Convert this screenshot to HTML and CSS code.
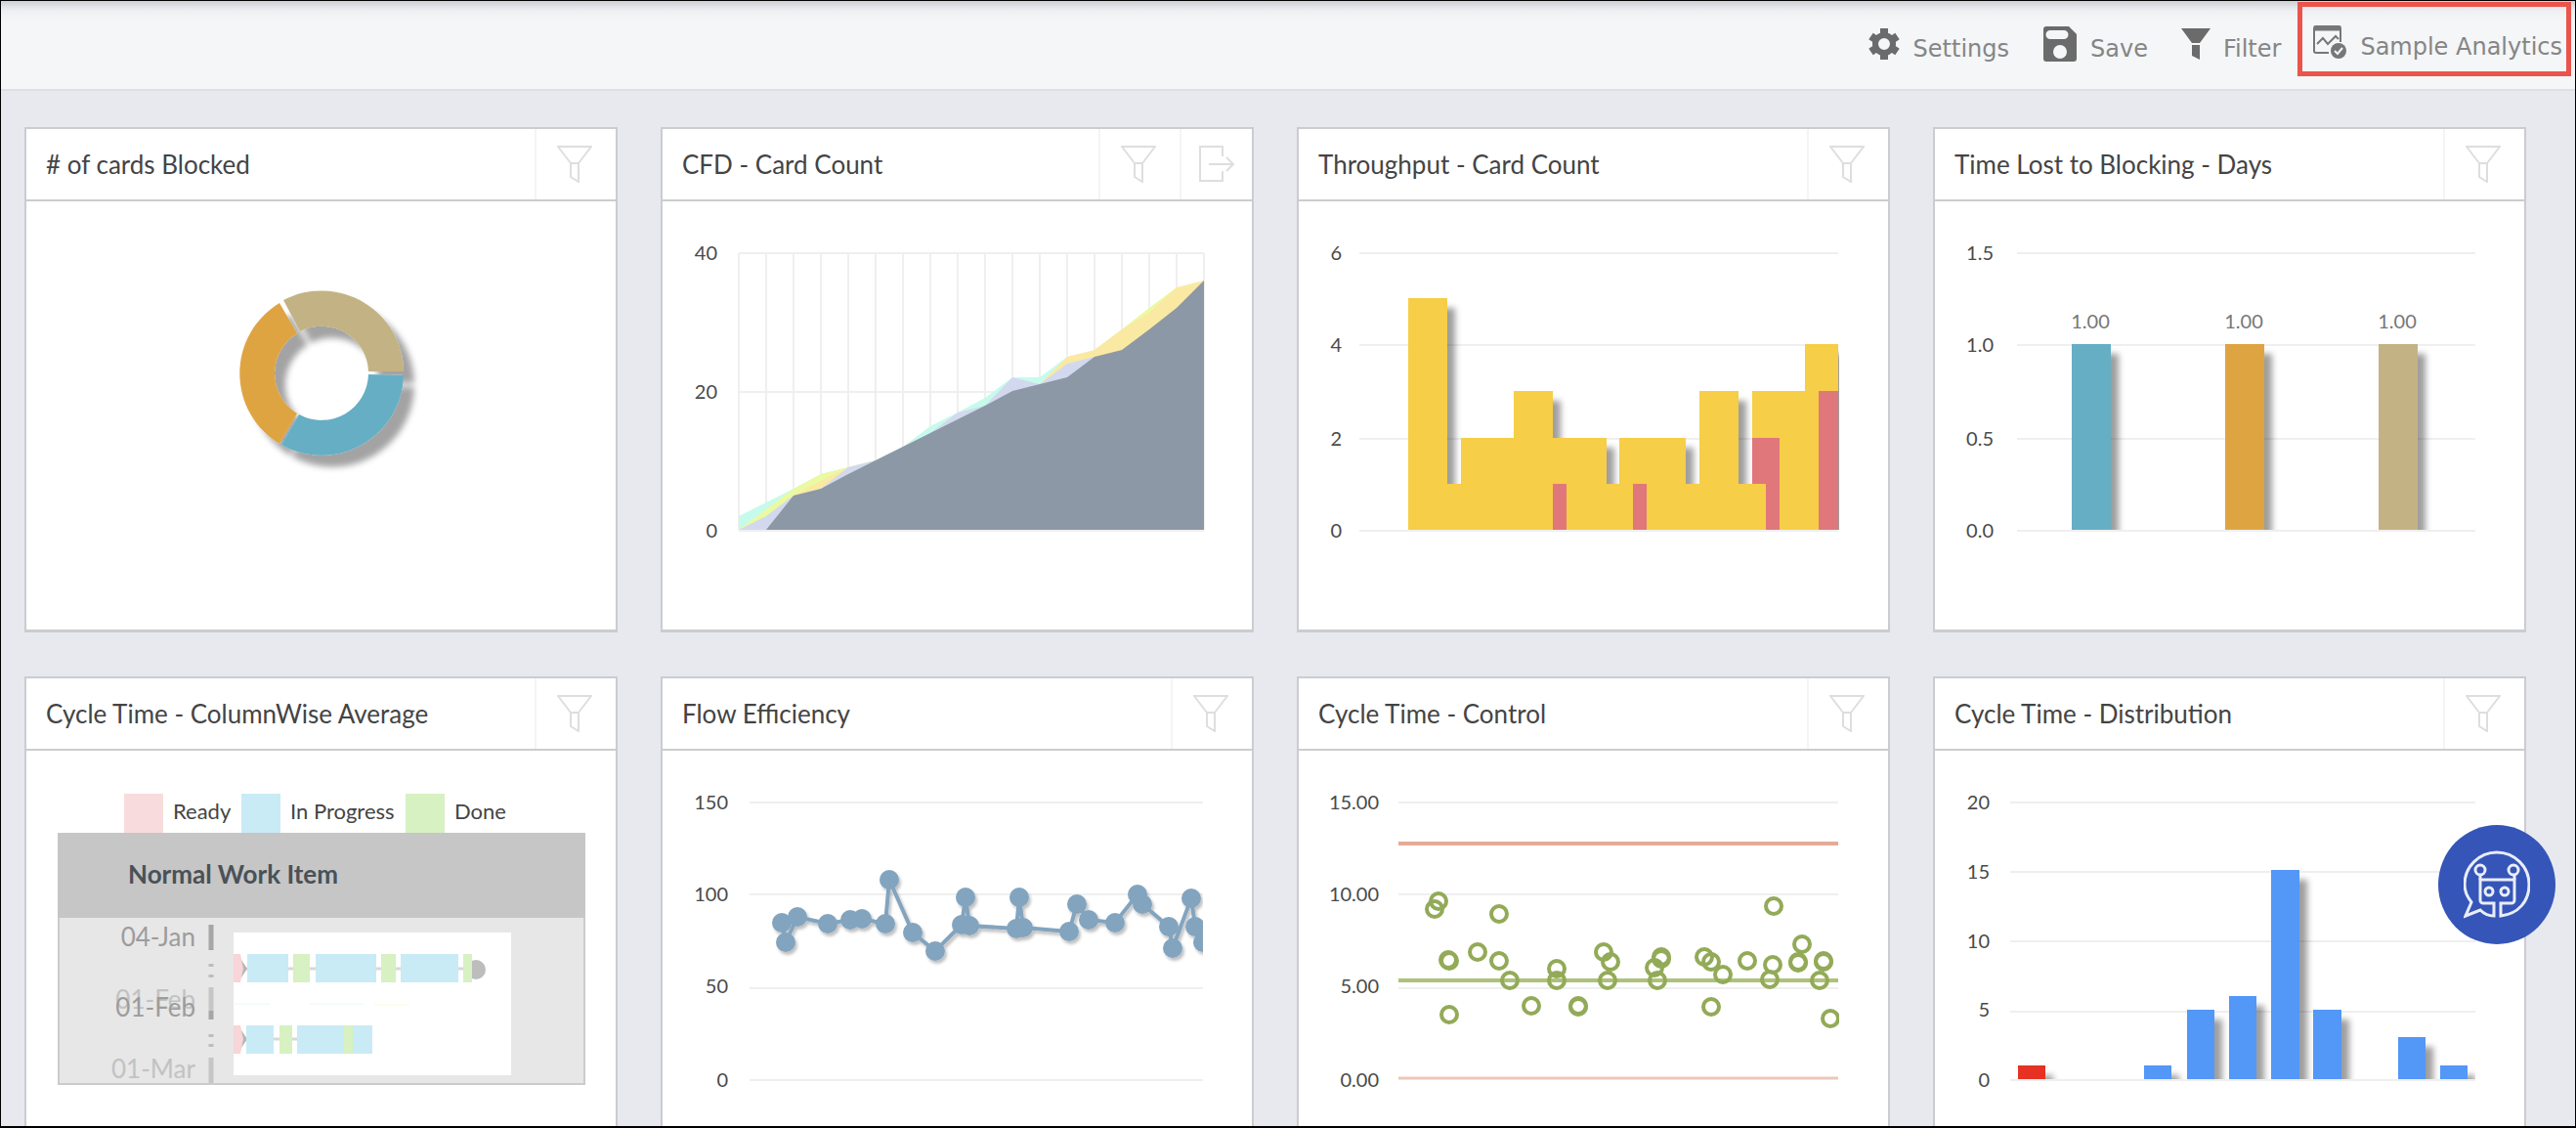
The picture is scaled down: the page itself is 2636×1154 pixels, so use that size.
FILE: index.html
```html
<!DOCTYPE html>
<html lang="en">
<head>
    <meta charset="UTF-8">
    <meta name="viewport" content="width=device-width, initial-scale=1.0">
    <title>Analytics Dashboard</title>
    <link rel="stylesheet" href="styles.css">
</head>
<body>
    <svg class="defs" aria-hidden="true">
        <defs>
            <filter id="shadow" x="-20%" y="-20%" width="150%" height="150%">
                <feDropShadow dx="8" dy="10" stdDeviation="3" flood-color="#000" flood-opacity="0.38"/>
            </filter>
            <filter id="ringShadow" x="-20%" y="-20%" width="150%" height="150%">
                <feDropShadow dx="11" dy="12" stdDeviation="3" flood-color="#000" flood-opacity="0.36"/>
            </filter>
            <filter id="dotShadow" x="-10%" y="-20%" width="120%" height="150%">
                <feDropShadow dx="2" dy="3" stdDeviation="1.5" flood-color="#000" flood-opacity="0.25"/>
            </filter>
            <clipPath id="plot"><rect x="78" y="40" width="475" height="296"/></clipPath>
            <symbol id="funnel" viewBox="0 0 36 38">
                <path d="M1 1h34L22 18v19l-8-5V18z M14 18h8" fill="none" stroke="#dedede" stroke-width="2"/>
            </symbol>
        </defs>
    </svg>
    <div class="page">
        <header class="toolbar">
            <button class="tool">
                <svg width="34" height="34" viewBox="0 0 34 34" fill="none" stroke="#6b6b6b"><circle cx="17" cy="17" r="9" stroke-width="6"/><path stroke-width="8" d="M17 1V7 M17 27V33 M3.500 9L8 12 M26 22L30.500 25 M3.500 25L8 22 M26 12L30.500 9"/></svg>
                <span>Settings</span>
            </button>
            <button class="tool">
                <svg width="36" height="38" viewBox="0 0 36 38"><path fill="#6b6b6b" fill-rule="evenodd" d="M4 1h23l8 8v25a3 3 0 0 1-3 3H4a3 3 0 0 1-3-3V4a3 3 0 0 1 3-3z M8 5a4 4 0 0 0 0 9h14a4 4 0 0 0 0-9z M18 20a7 7 0 1 0 0 14a7 7 0 1 0 0-14z"/></svg>
                <span>Save</span>
            </button>
            <button class="tool">
                <svg width="30" height="34" viewBox="0 0 30 34"><path fill="#6b6b6b" d="M0 1h30L19 16h-8z M11 18h8v15l-8-4z"/></svg>
                <span>Filter</span>
            </button>
            <button class="tool tool-active">
                <svg width="36" height="38" viewBox="0 0 36 38" fill="none" stroke="#777" stroke-width="2"><path d="M17 30H4a2 2 0 0 1-2-2V5a2 2 0 0 1 2-2h23a2 2 0 0 1 2 2v14"/><path d="M2 5h27" stroke-width="5"/><path d="M5 21l6-6 5 6 8-8 3 3"/><circle cx="27" cy="28" r="8" fill="#777" stroke="none"/><path d="M23 28l3 3 5-6" stroke="#f4f6f8"/></svg>
                <span>Sample Analytics</span>
            </button>
        </header>

        <main class="board">
            <section class="card">
                <div class="card-head">
                    <h2># of cards Blocked</h2>
                    <button class="icon-btn" aria-label="Filter"><svg width="36" height="38"><use href="#funnel"/></svg></button>
                </div>
                <svg class="chart" viewBox="0 0 603 438">
                    <g filter="url(#ringShadow)">
                        <path fill="#c3b384" d="M263 101A84 84 0 0 1 386 174H350A48 48 0 0 0 280 133z"/>
                        <path fill="#66aec4" d="M386 178A84 84 0 0 1 261 249L279 218A48 48 0 0 0 350 177z"/>
                        <path fill="#dfa443" d="M259 248A84 84 0 0 1 259 104L277 135A48 48 0 0 0 277 217z"/>
                    </g>
                </svg>
            </section>

            <section class="card">
                <div class="card-head">
                    <h2>CFD - Card Count</h2>
                    <button class="icon-btn" aria-label="Filter"><svg width="36" height="38"><use href="#funnel"/></svg></button>
                    <button class="icon-btn icon-export" aria-label="Export"><svg width="38" height="38" viewBox="0 0 38 38" fill="none" stroke="#dedede" stroke-width="2"><path d="M25 11V1H2v35h23V26 M11 19h25 M29 12l7 7-7 7"/></svg></button>
                </div>
                <svg class="chart" viewBox="0 0 603 438">
                    <path class="grid" d="M78 53H554 M78 195H554 M78 337H554 M78 53V336 M106 53V336 M134 53V336 M162 53V336 M190 53V336 M218 53V336 M246 53V336 M274 53V336 M302 53V336 M330 53V336 M358 53V336 M386 53V336 M414 53V336 M442 53V336 M470 53V336 M498 53V336 M526 53V336 M554 53V336"/>
                    <path fill="#c6fbec" d="M78 322L106 308 134 294 162 279 190 272 218 265 246 251 274 230 302 216 330 201 358 180 386 180 414 159V336H78z"/>
                    <path fill="#ebf9a0" d="M78 336L106 315 134 294 162 279 190 272 218 265V336z M442 152L470 131 498 109 526 88V336H442z"/>
                    <path fill="#fae9a2" d="M134 301L162 286 190 272V336H134z M386 187L414 159 442 152 470 131 498 114 526 88 554 81V336H386z"/>
                    <path fill="#d2d9ef" d="M78 336L106 322 134 301 162 294 190 272 218 265 246 251 274 237 302 216 330 209 358 180 386 187 414 166 442 159V336z"/>
                    <path fill="#8c98a5" d="M106 336L134 301 162 294 190 279 218 265 246 251 274 237 302 223 330 209 358 194 386 187 414 180 442 159 470 152 498 131 526 109 554 81V336z"/>
                    <g class="axis"><text x="56" y="60">40</text><text x="56" y="202">20</text><text x="56" y="344">0</text></g>
                </svg>
            </section>

            <section class="card">
                <div class="card-head">
                    <h2>Throughput - Card Count</h2>
                    <button class="icon-btn" aria-label="Filter"><svg width="36" height="38"><use href="#funnel"/></svg></button>
                </div>
                <svg class="chart" viewBox="0 0 603 438">
                    <path class="grid" d="M62 53H552 M62 147H552 M62 243H552 M62 337H552"/>
                    <g clip-path="url(#plot)">
                        <path fill="#f6ce47" filter="url(#shadow)" d="M112 336V99H152V289H166V242H220V194H260V242H315V289H328V242H396V289H410V194H450V289H464V194H518V146H552V336z"/>
                        <path fill="#e0777b" d="M260 289H274V336H260z M342 289H356V336H342z M464 242H492V336H478V289H464z M532 194H552V336H532z"/>
                    </g>
                    <g class="axis"><text x="44" y="60">6</text><text x="44" y="154">4</text><text x="44" y="250">2</text><text x="44" y="344">0</text></g>
                </svg>
            </section>

            <section class="card">
                <div class="card-head">
                    <h2>Time Lost to Blocking - Days</h2>
                    <button class="icon-btn" aria-label="Filter"><svg width="36" height="38"><use href="#funnel"/></svg></button>
                </div>
                <svg class="chart" viewBox="0 0 603 438">
                    <path class="grid" d="M84 53H553 M84 147H553 M84 243H553 M84 337H553"/>
                    <g clip-path="url(#plot)">
                        <g filter="url(#shadow)">
                            <rect fill="#66aec4" x="140" y="146" width="40" height="190"/>
                            <rect fill="#dfa443" x="297" y="146" width="40" height="190"/>
                            <rect fill="#c3b384" x="454" y="146" width="40" height="190"/>
                        </g>
                    </g>
                    <g class="axis"><text x="60" y="60">1.5</text><text x="60" y="154">1.0</text><text x="60" y="250">0.5</text><text x="60" y="344">0.0</text></g>
                    <g class="values"><text x="159" y="130">1.00</text><text x="316" y="130">1.00</text><text x="473" y="130">1.00</text></g>
                </svg>
            </section>

            <section class="card">
                <div class="card-head">
                    <h2>Cycle Time - ColumnWise Average</h2>
                    <button class="icon-btn" aria-label="Filter"><svg width="36" height="38"><use href="#funnel"/></svg></button>
                </div>
                <svg class="chart" viewBox="0 0 603 438">
                    <rect fill="#f8dcdd" x="100" y="44" width="40" height="40"/>
                    <rect fill="#c8ebf6" x="220" y="44" width="40" height="40"/>
                    <rect fill="#d7f1c2" x="388" y="44" width="40" height="40"/>
                    <g class="legend"><text x="150" y="70">Ready</text><text x="270" y="70">In Progress</text><text x="438" y="70">Done</text></g>
                    <rect fill="#e7e7e7" stroke="#cbcbcb" stroke-width="2" x="33" y="85" width="538" height="256"/>
                    <rect fill="#c6c6c6" x="32" y="84" width="540" height="87"/>
                    <text class="lane-title" x="104" y="136">Normal Work Item</text>
                    <!-- time scale -->
                    <g class="dates">
                        <text x="173" y="200">04-Jan</text>
                        <text class="faded" x="173" y="264">01-Feb</text>
                        <text x="173" y="272">01-Feb</text>
                        <text class="faded" x="173" y="335">01-Mar</text>
                    </g>
                    <path stroke="#a6a6a6" stroke-width="5" d="M189 178V204 M189 266V275"/>
                    <path stroke="#c6c6c6" stroke-width="5" d="M189 242V266 M189 314V340"/>
                    <path stroke="#bdbdbd" stroke-width="5" d="M189 218V221 M189 229V232 M189 290V293 M189 300V303"/>
                    <rect fill="#fff" x="212" y="186" width="284" height="146"/>
                    <path stroke="#d8d8d8" stroke-width="3" d="M220 223H460 M220 295H280"/>
                    <path stroke="#f5fbfc" stroke-width="2" d="M213 259H250 M290 259H345"/>
                    <path stroke="#fdfdec" stroke-width="2" d="M356 260H392"/>
                    <path fill="#b5b5b5" d="M220 214L226 223 220 232z M220 286L226 295 220 304z"/>
                    <circle cx="460" cy="224" r="10" fill="#bdbdbd"/>
                    <path fill="#f8d5d8" d="M212 208H219L222 223 219 237H212z M212 281H219L222 295 219 310H212z"/>
                    <path fill="#c8ebf6" d="M226 208H268V237H226z M296 208H358V237H296z M383 208H442V237H383z M225 281H253V310H225z M277 281H354V310H277z"/>
                    <path fill="#d7f1c2" d="M273 208H290V237H273z M363 208H378V237H363z M447 208H456V237H447z M259 281H272V310H259z M325 281H334V310H325z"/>
                </svg>
            </section>

            <section class="card">
                <div class="card-head">
                    <h2>Flow Efficiency</h2>
                    <button class="icon-btn" aria-label="Filter"><svg width="36" height="38"><use href="#funnel"/></svg></button>
                </div>
                <svg class="chart" viewBox="0 0 603 438">
                    <path class="grid" d="M89 53H553 M89 147H553 M89 243H553 M89 337H553"/>
                    <g clip-path="url(#plot)">
                        <g class="flow" filter="url(#dotShadow)">
                            <polyline points="122,176 126,196 138,170 169,177 192,173 204,172 228,177 232,132 256,186 279,205 306,178 310,150 314,179 362,182 365,150 369,181 416,185 424,157 436,173 463,176 486,147 491,157 518,180 522,202 541,151 545,180 553,196"/>
                            <circle cx="122" cy="176" r="10"/><circle cx="126" cy="196" r="10"/><circle cx="138" cy="170" r="10"/>
                            <circle cx="169" cy="177" r="10"/><circle cx="192" cy="173" r="10"/><circle cx="204" cy="172" r="10"/>
                            <circle cx="228" cy="177" r="10"/><circle cx="232" cy="132" r="10"/><circle cx="256" cy="186" r="10"/>
                            <circle cx="279" cy="205" r="10"/><circle cx="306" cy="178" r="10"/><circle cx="310" cy="150" r="10"/>
                            <circle cx="314" cy="179" r="10"/><circle cx="362" cy="182" r="10"/><circle cx="365" cy="150" r="10"/>
                            <circle cx="369" cy="181" r="10"/><circle cx="416" cy="185" r="10"/><circle cx="424" cy="157" r="10"/>
                            <circle cx="436" cy="173" r="10"/><circle cx="463" cy="176" r="10"/><circle cx="486" cy="147" r="10"/>
                            <circle cx="491" cy="157" r="10"/><circle cx="518" cy="180" r="10"/><circle cx="522" cy="202" r="10"/>
                            <circle cx="541" cy="151" r="10"/><circle cx="545" cy="180" r="10"/><circle cx="553" cy="196" r="10"/>
                        </g>
                    </g>
                    <g class="axis"><text x="67" y="60">150</text><text x="67" y="154">100</text><text x="67" y="248">50</text><text x="67" y="344">0</text></g>
                </svg>
            </section>

            <section class="card">
                <div class="card-head">
                    <h2>Cycle Time - Control</h2>
                    <button class="icon-btn" aria-label="Filter"><svg width="36" height="38"><use href="#funnel"/></svg></button>
                </div>
                <svg class="chart" viewBox="0 0 603 438">
                    <path class="grid" d="M102 53H552 M102 147H552 M102 243H552"/>
                    <path stroke="#e5ab99" stroke-width="4" d="M102 95H552"/>
                    <path stroke="#ecc8b9" stroke-width="3" d="M102 335H552"/>
                    <path stroke="#adc17b" stroke-width="4" d="M102 235H552"/>
                    <g class="scatter" clip-path="url(#plot)">
                        <circle cx="139" cy="162" r="8"/><circle cx="143" cy="154" r="8"/><circle cx="205" cy="167" r="8"/>
                        <circle cx="153" cy="214" r="8"/><circle cx="154" cy="215" r="8"/><circle cx="183" cy="206" r="8"/>
                        <circle cx="205" cy="215" r="8"/><circle cx="216" cy="235" r="8"/><circle cx="154" cy="270" r="8"/>
                        <circle cx="238" cy="261" r="8"/><circle cx="264" cy="223" r="8"/><circle cx="264" cy="235" r="8"/>
                        <circle cx="286" cy="261" r="8"/><circle cx="286" cy="262" r="8"/><circle cx="312" cy="206" r="8"/>
                        <circle cx="319" cy="216" r="8"/><circle cx="316" cy="235" r="8"/><circle cx="364" cy="222" r="8"/>
                        <circle cx="371" cy="211" r="8"/><circle cx="371" cy="213" r="8"/><circle cx="367" cy="235" r="8"/>
                        <circle cx="415" cy="211" r="8"/><circle cx="422" cy="216" r="8"/><circle cx="434" cy="229" r="8"/>
                        <circle cx="422" cy="262" r="8"/><circle cx="459" cy="215" r="8"/><circle cx="486" cy="159" r="8"/>
                        <circle cx="485" cy="219" r="8"/><circle cx="482" cy="234" r="8"/><circle cx="515" cy="198" r="8"/>
                        <circle cx="511" cy="216" r="8"/><circle cx="511" cy="217" r="8"/><circle cx="537" cy="215" r="8"/>
                        <circle cx="537" cy="216" r="8"/><circle cx="533" cy="235" r="8"/><circle cx="544" cy="274" r="8"/>
                    </g>
                    <g class="axis"><text x="82" y="60">15.00</text><text x="82" y="154">10.00</text><text x="82" y="248">5.00</text><text x="82" y="344">0.00</text></g>
                </svg>
            </section>

            <section class="card">
                <div class="card-head">
                    <h2>Cycle Time - Distribution</h2>
                    <button class="icon-btn" aria-label="Filter"><svg width="36" height="38"><use href="#funnel"/></svg></button>
                </div>
                <svg class="chart" viewBox="0 0 603 438">
                    <path class="grid" d="M77 53H553 M77 124H553 M77 195H553 M77 267H553 M77 337H553"/>
                    <g clip-path="url(#plot)">
                        <g filter="url(#shadow)">
                            <rect fill="#e63323" x="85" y="322" width="28" height="14"/>
                            <path fill="#5297f7" d="M214 322H242V336H214z M258 265H286V336H258z M301 251H329V336H301z M344 122H373V336H344z M387 265H416V336H387z M474 293H502V336H474z M517 322H545V336H517z"/>
                        </g>
                    </g>
                    <g class="axis"><text x="56" y="60">20</text><text x="56" y="131">15</text><text x="56" y="202">10</text><text x="56" y="272">5</text><text x="56" y="344">0</text></g>
                </svg>
            </section>
        </main>
    </div>

    <button class="chat-btn" aria-label="Open chat">
        <svg width="68" height="70" viewBox="0 0 68 70" fill="none" stroke="#e9edf8" stroke-width="3">
            <path d="M31 67V54H20a3 3 0 0 1-3-3V30H52V51a3 3 0 0 1-3 3H38V67C56 65 67 52 67 35A33 33 0 0 0 1 35C1 42 4 48 8 53L2 67 17 61C21 65 26 67 31 67z"/>
            <path d="M17 30V25 M52 30V25"/>
            <circle cx="17" cy="20" r="5"/><circle cx="51" cy="20" r="5"/>
            <circle cx="26" cy="42" r="4"/><circle cx="42" cy="42" r="4"/>
        </svg>
    </button>
</body>
</html>
```
FILE: styles.css
```css
* {
    box-sizing: border-box;
}
body {
    margin: 0;
    overflow: hidden;
    background-color: #e7e9ef;
    font-family: Lato, "Liberation Sans", sans-serif;
    color: #444;
}
button {
    border: none;
    background: none;
    padding: 0;
    cursor: pointer;
}
.defs {
    position: absolute;
    width: 0;
    height: 0;
}
.page {
    height: 100vh;
    overflow: hidden;
    border: 1px solid #000;
    border-bottom-width: 2px;
}
.toolbar {
    display: flex;
    justify-content: flex-end;
    align-items: flex-start;
    height: 92px;
    padding: 1px 4px 0 0;
    background: linear-gradient(#cfd0d3, #eff0f3 10px, #f4f6f8 20px);
    border-bottom: 2px solid #dddfe3;
}
.tool {
    display: flex;
    align-items: center;
    gap: 13px;
    height: 76px;
    padding: 10px 17px 0;
    font-family: "DejaVu Sans", Verdana, sans-serif;
    font-size: 24px;
    color: #858585;
}
.tool span {
    padding-top: 10px;
}
.tool-active {
    border: 5px solid #ea544c;
    padding: 5px 4px 0 10px;
}
.board {
    display: grid;
    grid-template-columns: repeat(4, 1fr);
    gap: 45px 44px;
    padding: 37px 50px 45px 24px;
}
.card {
    background: #fff;
    border: 2px solid #cbccd0;
    border-bottom-width: 3px;
}
.card-head {
    display: flex;
    align-items: stretch;
    height: 74px;
    border-bottom: 2px solid #cbccd0;
}
.card-head h2 {
    flex: 1;
    margin: 0;
    padding-left: 20px;
    font-size: 26px;
    font-weight: 400;
    line-height: 72px;
}
.icon-btn {
    display: flex;
    justify-content: center;
    align-items: center;
    width: 83px;
    padding-right: 4px;
    border-left: 2px solid #f4f4f4;
}
.icon-export {
    width: 74px;
    padding-right: 0;
}
.chart {
    display: block;
    width: 100%;
}
.grid {
    fill: none;
    stroke: #efefef;
    stroke-width: 2;
}
.axis text {
    font-size: 20px;
    fill: #4a4a4a;
    text-anchor: end;
}
.values text {
    font-size: 20px;
    fill: #777;
    text-anchor: middle;
}
.legend text {
    font-size: 22px;
    fill: #444;
}
.lane-title {
    font-size: 26px;
    font-weight: 700;
    fill: #4a5158;
}
.dates text {
    font-size: 26px;
    fill: #9c9c9c;
    text-anchor: end;
}
.dates .faded {
    fill: #c2c2c2;
}
.flow {
    fill: #82a4bf;
}
.flow polyline {
    fill: none;
    stroke: #82a4bf;
    stroke-width: 4;
}
.scatter {
    fill: none;
    stroke: #93aa58;
    stroke-width: 4;
}
.chat-btn {
    position: fixed;
    right: 21px;
    bottom: 188px;
    display: flex;
    justify-content: center;
    align-items: center;
    width: 120px;
    height: 122px;
    border-radius: 50%;
    background: #3555b8;
}
```
